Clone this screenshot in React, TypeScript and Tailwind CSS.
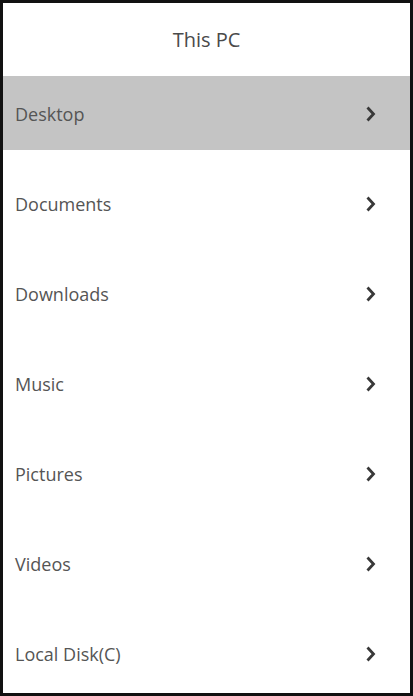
import React from 'react'

const folders = [
  'Desktop',
  'Documents',
  'Downloads',
  'Music',
  'Pictures',
  'Videos',
  'Local Disk(C)',
]

function Chevron() {
  return (
    <svg width="12" height="18" viewBox="0 0 12 18" fill="none">
      <path
        d="M2.5 2.5 L8.5 9 L2.5 15.5"
        stroke="#383838"
        strokeWidth="2.8"
        strokeLinecap="butt"
        strokeLinejoin="miter"
      />
    </svg>
  )
}

export default function App() {
  return (
    <div
      className="h-[696px] w-[413px] bg-white border-[3px] border-[#111] flex flex-col overflow-hidden"
      style={{ fontFamily: '"Open Sans", "Noto Sans", sans-serif' }}
    >
      <header className="h-[73px] flex items-center justify-center text-[20px] text-[#4a4a4a]">
        This PC
      </header>
      <ul className="flex flex-col gap-4">
        {folders.map((name, i) => (
          <li
            key={name}
            className={
              i === 0
                ? 'h-[74px] flex items-center justify-between pl-3 pr-[33px] pt-[2px] bg-[#c4c4c4]'
                : 'h-[74px] flex items-center justify-between pl-3 pr-[33px] pt-[2px]'
            }
          >
            <span className="text-[18px] text-[#555]">{name}</span>
            <Chevron />
          </li>
        ))}
      </ul>
    </div>
  )
}
